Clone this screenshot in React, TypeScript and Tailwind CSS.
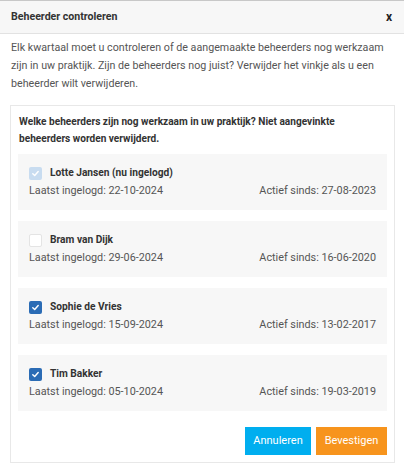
import React from "react";

type Beheerder = {
    naam: string;
    laatst: string;
    sinds: string;
    status: "self" | "on" | "off";
};

const beheerders: Beheerder[] = [
    { naam: "Lotte Jansen (nu ingelogd)", laatst: "22-10-2024", sinds: "27-08-2023", status: "self" },
    { naam: "Bram van Dijk", laatst: "29-06-2024", sinds: "16-06-2020", status: "off" },
    { naam: "Sophie de Vries", laatst: "15-09-2024", sinds: "13-02-2017", status: "on" },
    { naam: "Tim Bakker", laatst: "05-10-2024", sinds: "19-03-2019", status: "on" },
];

function Check({ status }: { status: Beheerder["status"] }) {
    if (status === "off") {
        return <span className="block h-[13px] w-[13px] rounded-[2px] border border-[#e4e4e4] bg-white" />;
    }
    const bg = status === "self" ? "bg-[#c8dcf0]" : "bg-[#2b6cb5]";
    return (
        <span className={`flex h-[13px] w-[13px] items-center justify-center rounded-[2px] ${bg}`}>
            <svg width="9" height="9" viewBox="0 0 10 10" fill="none">
                <path d="M2 5.2 4.1 7.2 8 2.8" stroke="white" strokeWidth="1.6" strokeLinecap="round" strokeLinejoin="round" />
            </svg>
        </span>
    );
}

export default function App() {
    return (
        <div className="h-[472px] w-[404px] overflow-hidden bg-white font-['Roboto',sans-serif] text-[11px]">
            <div className="flex h-[34px] items-center justify-between border-t border-b border-t-[#c8c8c8] border-b-[#e2e2e2] bg-[#f7f7f7] pr-[12px] pl-[11px]">
                <span className="text-[10.6px] font-bold text-[#333]">Beheerder controleren</span>
                <span className="text-[12px] font-bold text-[#222]">x</span>
            </div>

            <p className="mt-[5px] px-[11px] text-[10.7px] leading-[18px] text-[#555]">
                Elk kwartaal moet u controleren of de aangemaakte beheerders nog werkzaam zijn in uw praktijk. Zijn de
                beheerders nog juist? Verwijder het vinkje als u een beheerder wilt verwijderen.
            </p>

            <div className="mx-[10px] mt-[12px] w-[385px] border border-[#e8e8e8] p-[7px]">
                <p className="px-[1px] text-[10.1px] leading-[17px] font-bold text-[#333]">
                    Welke beheerders zijn nog werkzaam in uw praktijk? Niet aangevinkte beheerders worden verwijderd.
                </p>

                <div className="mt-[7px] flex flex-col gap-[11px]">
                    {beheerders.map((b) => (
                        <div key={b.naam} className="h-[56px] bg-[#f7f7f7] px-[11px] py-[10px] leading-[18px]">
                            <div className="flex items-center gap-[8px]">
                                <Check status={b.status} />
                                <span className="text-[10.2px] font-bold text-[#333]">{b.naam}</span>
                            </div>
                            <div className="flex justify-between text-[10.8px] text-[#555]">
                                <span>Laatst ingelogd: {b.laatst}</span>
                                <span>Actief sinds: {b.sinds}</span>
                            </div>
                        </div>
                    ))}
                </div>

                <div className="mt-[16px] flex justify-end gap-[5px]">
                    <button className="h-[28px] w-[66px] bg-[#00aeef] text-white">Annuleren</button>
                    <button className="h-[28px] w-[71px] bg-[#f7941d] text-white">Bevestigen</button>
                </div>
            </div>
        </div>
    );
}
